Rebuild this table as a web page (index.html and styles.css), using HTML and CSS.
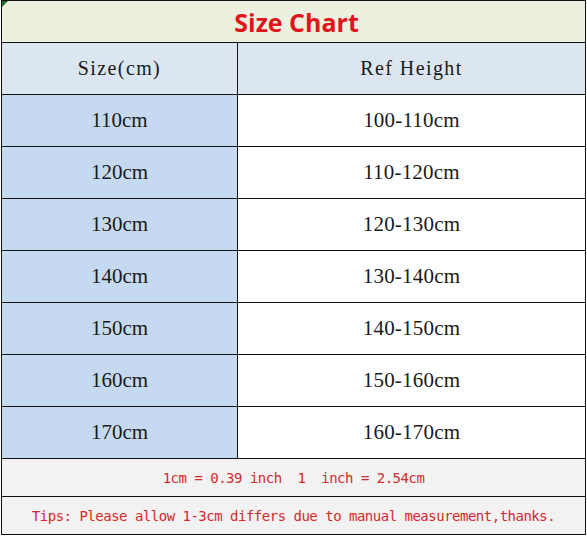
FILE: index.html
```html
<!DOCTYPE html>
<html>
<head>
<meta charset="utf-8">
<link rel="stylesheet" href="styles.css">
</head>
<body>
<table class="chart">
  <colgroup><col class="col-size"><col class="col-ref"></colgroup>
  <tr class="title-row"><td colspan="2" class="title">Size Chart</td></tr>
  <tr class="head-row"><td class="head">Size(cm)</td><td class="head">Ref Height</td></tr>
  <tr class="row"><td class="size">110cm</td><td class="ref">100-110cm</td></tr>
  <tr class="row"><td class="size">120cm</td><td class="ref">110-120cm</td></tr>
  <tr class="row"><td class="size">130cm</td><td class="ref">120-130cm</td></tr>
  <tr class="row"><td class="size">140cm</td><td class="ref">130-140cm</td></tr>
  <tr class="row"><td class="size">150cm</td><td class="ref">140-150cm</td></tr>
  <tr class="row"><td class="size">160cm</td><td class="ref">150-160cm</td></tr>
  <tr class="row"><td class="size">170cm</td><td class="ref">160-170cm</td></tr>
  <tr class="note-row"><td colspan="2" class="note">1cm = 0.39 inch  1  inch = 2.54cm</td></tr>
  <tr class="note-row"><td colspan="2" class="note">Tips: Please allow 1-3cm differs due to manual measurement,thanks.</td></tr>
</table>
</body>
</html>
```
FILE: styles.css
```css
html, body {
  margin: 0;
  padding: 0;
  background: #ffffff;
}

.chart {
  margin-left: 1px;
  width: 585px;
  border-collapse: collapse;
  table-layout: fixed;
  position: relative;
  font-family: "Liberation Serif", serif;
  color: #1a1a1a;
}

.col-size { width: 236px; }

.chart td {
  border: 1px solid #111;
  padding: 0;
  text-align: center;
  vertical-align: middle;
}

.title-row td { height: 41px; }
.head-row td { height: 51px; }
.row td { height: 51px; }
.note-row td { height: 37px; }

.title {
  position: relative;
  background: #ebf1de;
  font-family: "Open Sans", sans-serif;
  font-weight: 700;
  font-size: 25px;
  color: #e1141c;
  padding-bottom: 2px;
  text-indent: 6px;
}

.title::before {
  content: "";
  position: absolute;
  left: 0;
  top: 0;
  border-top: 6px solid #1f6b2a;
  border-right: 6px solid transparent;
}

.head {
  background: #dce6f1;
  font-size: 20px;
  letter-spacing: 1.4px;
  padding-top: 3px;
}

.size {
  background: #c5d9f1;
  font-size: 21px;
}

.ref {
  background: #ffffff;
  font-size: 21px;
  letter-spacing: 0.2px;
}

.size, .ref { padding-top: 5px; }

.note {
  background: #f2f2f2;
  color: #d42a2f;
  font-family: "DejaVu Sans Mono", monospace;
  font-size: 14px;
  letter-spacing: -0.5px;
  white-space: pre;
}
```
